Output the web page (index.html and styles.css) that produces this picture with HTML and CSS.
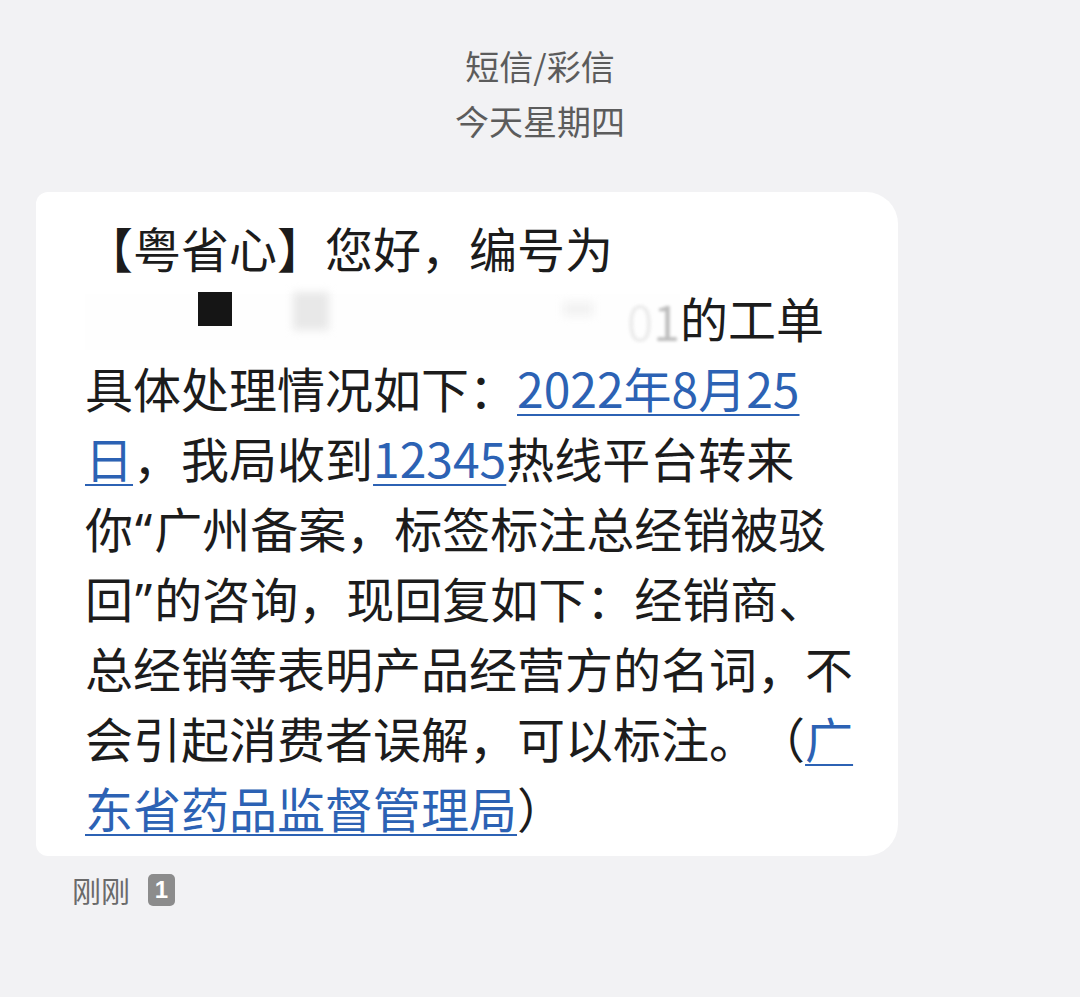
FILE: index.html
```html
<!DOCTYPE html>
<html lang="zh-CN">
<head>
<meta charset="utf-8">
<link rel="stylesheet" href="styles.css">
</head>
<body>
<div class="page">
  <header class="head">
    <div class="head-line">短信/彩信</div>
    <div class="head-line">今天星期四</div>
  </header>
  <div class="bubble">
    <p class="msg">【粤省心】您好，编号为<br><span class="redact"><span class="blk"></span><span class="smudge"></span><span class="smudge2"></span><span class="num"><span class="n0">0</span>1</span></span>的工单<br>具体处理情况如下：<a class="lnk">2022年8月25<br>日</a>，我局收到<a class="lnk">12345</a>热线平台转来<br>你<span class="q">“</span>广州备案，标签标注总经销被驳<br>回<span class="q">”</span>的咨询，现回复如下：经销商、<br>总经销等表明产品经营方的名词，不<br>会引起消费者误解，可以标注<span class="stop">。</span>（<a class="lnk">广<br>东省药品监督管理局</a>）</p>
  </div>
  <div class="meta">
    <span class="time">刚刚</span>
    <span class="sim">1</span>
  </div>
</div>
</body>
</html>
```

FILE: styles.css
```css
html, body {
  margin: 0;
  padding: 0;
  background: #f2f2f4;
}
body {
  width: 1080px;
  height: 997px;
  overflow: hidden;
  font-family: "Noto Sans CJK SC", "Noto Sans", sans-serif;
}
.page {
  display: flex;
  flex-direction: column;
  padding-top: 38px;
}
.head {
  display: flex;
  flex-direction: column;
  align-items: center;
  color: #5c5c5c;
  font-size: 34px;
  line-height: 55px;
}
.bubble {
  margin-top: 44px;
  margin-left: 36px;
  width: 813px;
  padding: 20px 0 14px 49px;
  background: #ffffff;
  border-radius: 12px 32px 32px 12px;
}
.msg {
  margin: 0;
  font-size: 48px;
  line-height: 70px;
  color: #1c1c1c;
  white-space: nowrap;
}
.lnk {
  color: #2c62b4;
  text-decoration: underline;
  text-decoration-thickness: 2px;
  text-underline-offset: 6px;
}
.q {
  font-family: "Noto Sans", sans-serif;
  line-height: 0;
  padding: 0 2px;
}
.stop {
  margin-right: 24px;
}
.redact {
  display: inline-block;
  position: relative;
  width: 595px;
  height: 56px;
  vertical-align: -12px;
  background: #fefefe;
}
.blk {
  position: absolute;
  left: 113px;
  top: -2px;
  width: 34px;
  height: 34px;
  background: #151515;
}
.smudge {
  position: absolute;
  left: 208px;
  top: -2px;
  width: 36px;
  height: 38px;
  background: #e8e8e8;
  filter: blur(4px);
}
.smudge2 {
  position: absolute;
  left: 478px;
  top: 8px;
  width: 30px;
  height: 14px;
  background: #f2f2f2;
  filter: blur(4px);
}
.num {
  position: absolute;
  right: 0;
  top: -9px;
  color: #bdbdbd;
  font-size: 48px;
  line-height: 70px;
  filter: blur(1.5px);
}
.n0 {
  color: #ececec;
}
.meta {
  display: flex;
  align-items: center;
  gap: 18px;
  margin-top: 14px;
  padding-left: 72px;
  height: 40px;
}
.time {
  font-size: 29px;
  color: #6a6a6a;
  line-height: 40px;
}
.sim {
  display: flex;
  align-items: center;
  justify-content: center;
  width: 27px;
  height: 32px;
  border-radius: 5px;
  background: #8c8c8c;
  color: #ffffff;
  font-family: "Liberation Sans", sans-serif;
  font-weight: bold;
  font-size: 24px;
}
```
